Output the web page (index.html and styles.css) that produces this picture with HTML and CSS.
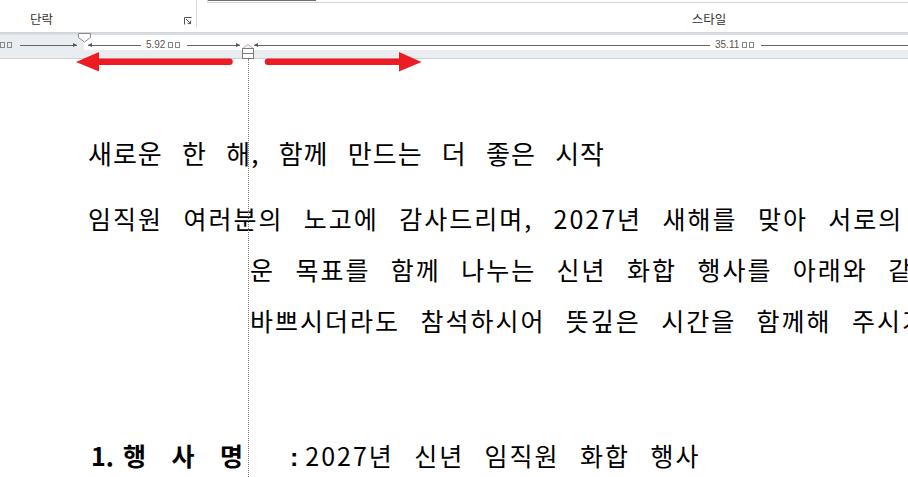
FILE: index.html
```html
<!DOCTYPE html>
<html lang="ko">
<head>
<meta charset="utf-8">
<title>신년 화합 행사 안내</title>
<link rel="stylesheet" href="styles.css">
</head>
<body>
<div class="ribbon">
  <div class="grp grp-para">
    <span class="grp-label">단락</span>
    <svg class="launcher" width="8" height="8" viewBox="0 0 8 8"><path d="M0.5 7.5V0.5H7.5" fill="none" stroke="#555" stroke-width="1"/><path d="M2 2L6.6 6.6M6.6 3.6V6.6H3.6" fill="none" stroke="#555" stroke-width="1"/></svg>
  </div>
  <div class="grp grp-style">
    <div class="gallery"><div class="gallery-sel"></div></div>
    <span class="grp-label">스타일</span>
  </div>
</div>
<div class="ribbon-edge"></div>
<div class="ruler">
  <div class="ruler-top">
    <div class="seg seg1">
      <span class="dim-label"><i class="box"></i><i class="box"></i></span>
      <span class="ln end-r"></span>
    </div>
    <div class="seg seg2">
      <span class="ln end-l"></span>
      <span class="dim-label">5.92 <i class="box"></i><i class="box"></i></span>
      <span class="ln end-r"></span>
    </div>
    <div class="seg seg3">
      <span class="ln ln-fixed end-l"></span>
      <span class="dim-label">35.11 <i class="box"></i><i class="box"></i></span>
      <span class="ln"></span>
    </div>
  </div>
  <div class="ruler-bottom"></div>
  <svg class="marker-first" width="13" height="10" viewBox="0 0 13 10"><path d="M0.5 0.5H12.5V4.5L6.5 9L0.5 4.5Z" fill="#fff" stroke="#8a8a8a"/></svg>
  <svg class="marker-hang" width="16" height="16" viewBox="0 0 16 16"><path d="M2.5 5.5L8 1.5L13.5 5.5" fill="#f4f4f4" stroke="#b5b5b5"/><rect x="2.5" y="5.5" width="11" height="10" fill="#fff" stroke="#7a7a7a"/><path d="M2.5 10.5H13.5" stroke="#7a7a7a"/></svg>
</div>
<div class="page">
  <div class="title">새로운 한 해, 함께 만드는 더 좋은 시작</div>
  <div class="para">임직원 여러분의 노고에 감사드리며, 2027년 새해를 맞아 서로의 마음을 모으고 새로<br>운 목표를 함께 나누는 신년 화합 행사를 아래와 같이 개최하고자 합니다.<br>바쁘시더라도 참석하시어 뜻깊은 시간을 함께해 주시기 바랍니다.</div>
  <div class="item"><span class="item-label"><span class="num">1.</span><span class="dist"><span>행</span><span>사</span><span>명</span></span></span><span class="item-value"><span class="colon">: </span>2027년 신년 임직원 화합 행사</span></div>
</div>
<div class="guide"></div>
<svg class="annot" width="908" height="80" viewBox="0 0 908 80">
  <line x1="97" y1="61.8" x2="229.5" y2="61.8" stroke="#ed1c24" stroke-width="6.5" stroke-linecap="round"/>
  <polygon points="76,62 99,52 99,71.5" fill="#ed1c24"/>
  <line x1="268" y1="61.8" x2="401" y2="61.8" stroke="#ed1c24" stroke-width="6.5" stroke-linecap="round"/>
  <polygon points="421.5,62 399,52 399,71.5" fill="#ed1c24"/>
</svg>
</body>
</html>
```
FILE: styles.css
```css
html, body {
  margin: 0;
  padding: 0;
  width: 908px;
  height: 477px;
  overflow: hidden;
  background: #fff;
}
body {
  position: relative;
  font-family: "Noto Sans CJK KR", "Noto Sans", sans-serif;
}
.ribbon {
  height: 32px;
  display: flex;
  background: #fff;
  overflow: hidden;
}
.grp {
  position: relative;
  flex: 0 0 auto;
  display: flex;
  flex-direction: column;
}
.grp-para {
  width: 197px;
  height: 27px;
  border-right: 1px solid #dadada;
  padding-left: 30px;
  box-sizing: border-box;
  justify-content: flex-end;
}
.grp-label {
  font-size: 12.5px;
  line-height: 16px;
  color: #333;
}
.launcher {
  position: absolute;
  right: 4px;
  bottom: 2px;
}
.grp-style {
  width: 1024px;
  align-items: center;
}
.gallery {
  align-self: flex-start;
  margin-left: 10px;
  width: 1000px;
  height: 2px;
  border-left: 1px solid #dcdcdc;
  border-bottom: 1px solid #d4d4d4;
}
.gallery-sel {
  width: 108px;
  height: 1px;
  background: #6e6e6e;
}
.grp-style .grp-label {
  margin-top: 8px;
}
.ribbon-edge {
  height: 3px;
  background: linear-gradient(#cdd3d8, #dfe3e7);
}
.ruler {
  position: relative;
}
.ruler-top {
  height: 15px;
  display: flex;
  background: linear-gradient(to right, #e9edf1 84px, #fff 84px);
}
.seg {
  flex: 0 0 auto;
  height: 20px;
  display: flex;
  align-items: center;
  gap: 5px;
}
.seg1 {
  width: 77px;
  gap: 6px;
  margin-right: 11px;
}
.seg2 {
  width: 152px;
  margin-right: 14px;
}
.seg3 {
  width: 1000px;
}
.ln {
  position: relative;
  flex: 1 1 auto;
  height: 1px;
  background: #666;
}
.ln-fixed {
  flex: 0 0 456px;
}
.end-r::after,
.end-l::before {
  content: "";
  position: absolute;
  top: -2px;
  border-top: 2.5px solid transparent;
  border-bottom: 2.5px solid transparent;
}
.end-r::after {
  right: 0;
  border-left: 4px solid #555;
}
.end-l::before {
  left: 0;
  border-right: 4px solid #555;
}
.dim-label {
  flex: 0 0 auto;
  font-family: "Liberation Sans", Arial, sans-serif;
  font-size: 10px;
  line-height: 12px;
  color: #555;
  display: flex;
  align-items: center;
  white-space: pre;
}
.box {
  display: inline-block;
  width: 3px;
  height: 4px;
  border: 1px solid #888;
  margin-right: 2px;
}
.ruler-bottom {
  height: 8px;
  background: #e9edf0;
  border-bottom: 1px solid #cdd2d6;
}
.marker-first {
  position: absolute;
  left: 78px;
  top: -2px;
}
.marker-hang {
  position: absolute;
  left: 240px;
  top: 8px;
}
.page {
  padding: 69px 0 0 88px;
  color: #000;
  white-space: nowrap;
}
.title {
  font-size: 26px;
  line-height: 50px;
  letter-spacing: 1px;
  word-spacing: 11px;
}
.para {
  margin: 15px 0 0 162px;
  text-indent: -162px;
  font-size: 25px;
  line-height: 51px;
  letter-spacing: 2px;
  word-spacing: 11.4px;
}
.item {
  margin-top: 84px;
  font-size: 25px;
  line-height: 50px;
  display: flex;
}
.item-label {
  display: flex;
  font-weight: 700;
  width: 202px;
}
.num {
  width: 35px;
  padding-left: 3px;
  box-sizing: border-box;
}
.dist {
  display: flex;
  justify-content: space-between;
  width: 120px;
}
.item-value {
  letter-spacing: 2px;
  word-spacing: 11.4px;
}
.colon {
  font-family: "Liberation Sans", Arial, sans-serif;
  font-weight: 700;
  letter-spacing: 0;
  word-spacing: 0;
}
.guide {
  position: absolute;
  left: 248px;
  top: 59px;
  bottom: 0;
  border-left: 1px dotted #7a7a7a;
}
.annot {
  position: absolute;
  left: 0;
  top: 0;
  pointer-events: none;
}
```
